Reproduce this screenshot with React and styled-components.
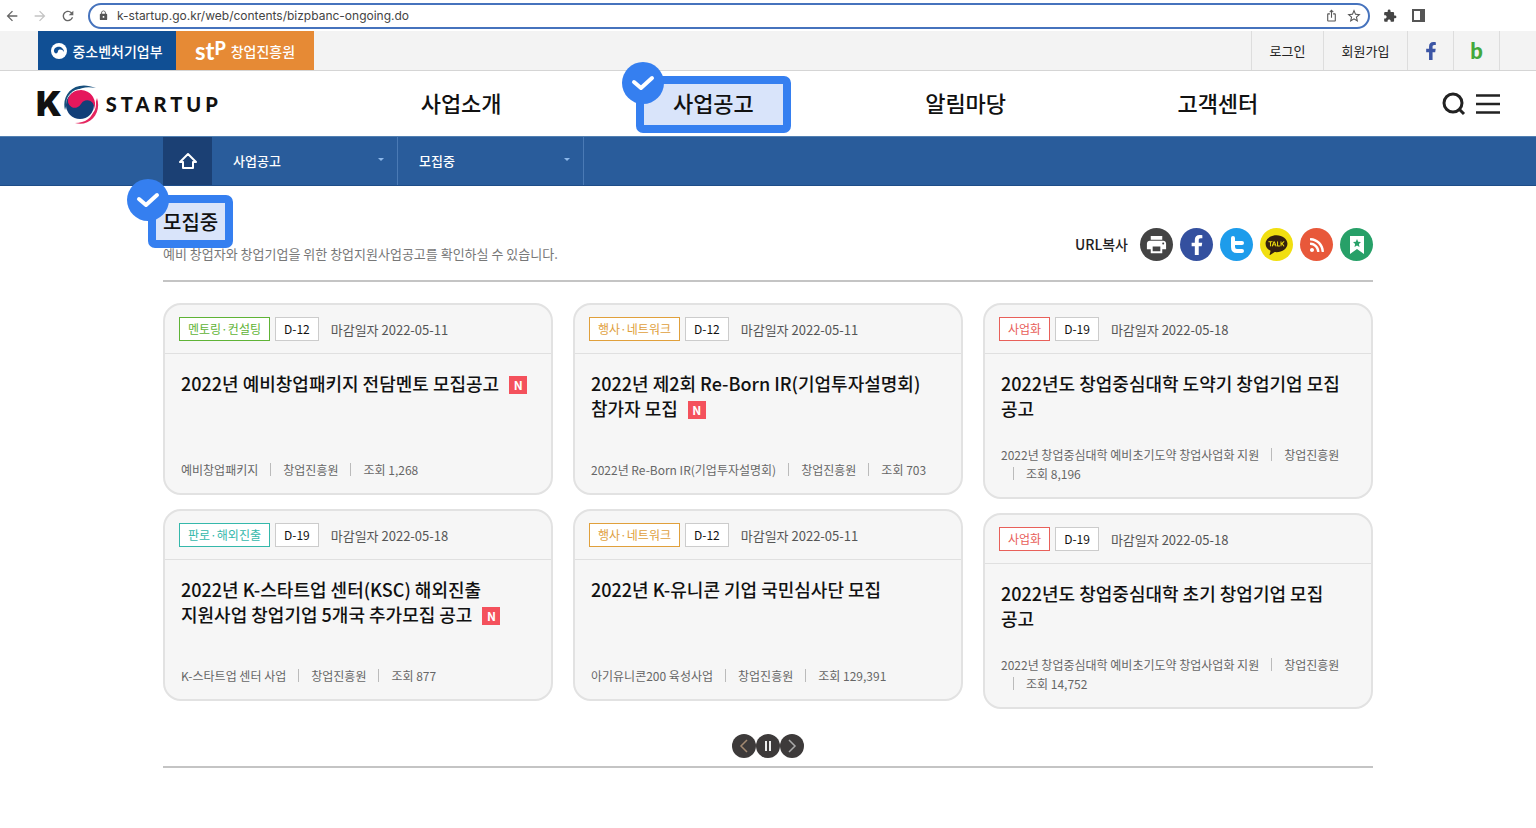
import React from "react"
import styled, { createGlobalStyle } from "styled-components"
import {
  MdArrowBack,
  MdArrowForward,
  MdRefresh,
  MdLock,
  MdIosShare,
  MdStarBorder,
  MdExtension,
  MdPrint,
} from "react-icons/md"
import { FaFacebookF, FaRss } from "react-icons/fa"
import { RiKakaoTalkFill } from "react-icons/ri"

const columns = [
  [
    {
      tag: "멘토링·컨설팅",
      color: "#5fb336",
      dday: "D-12",
      date: "2022-05-11",
      title: "2022년 예비창업패키지 전담멘토 모집공고",
      isNew: true,
      meta: ["예비창업패키지", "창업진흥원", "조회 1,268"],
    },
    {
      tag: "판로·해외진출",
      color: "#35b8ab",
      dday: "D-19",
      date: "2022-05-18",
      title: "2022년 K-스타트업 센터(KSC) 해외진출 지원사업 창업기업 5개국 추가모집 공고",
      isNew: true,
      meta: ["K-스타트업 센터 사업", "창업진흥원", "조회 877"],
    },
  ],
  [
    {
      tag: "행사·네트워크",
      color: "#e0a03c",
      dday: "D-12",
      date: "2022-05-11",
      title: "2022년 제2회 Re-Born IR(기업투자설명회) 참가자 모집",
      isNew: true,
      meta: ["2022년 Re-Born IR(기업투자설명회)", "창업진흥원", "조회 703"],
    },
    {
      tag: "행사·네트워크",
      color: "#e0a03c",
      dday: "D-12",
      date: "2022-05-11",
      title: "2022년 K-유니콘 기업 국민심사단 모집",
      meta: ["아기유니콘200 육성사업", "창업진흥원", "조회 129,391"],
    },
  ],
  [
    {
      tag: "사업화",
      color: "#e8605a",
      dday: "D-19",
      date: "2022-05-18",
      title: "2022년도 창업중심대학 도약기 창업기업 모집 공고",
      meta: ["2022년 창업중심대학 예비초기도약 창업사업화 지원", "창업진흥원", "조회 8,196"],
    },
    {
      tag: "사업화",
      color: "#e8605a",
      dday: "D-19",
      date: "2022-05-18",
      title: "2022년도 창업중심대학 초기 창업기업 모집 공고",
      meta: ["2022년 창업중심대학 예비초기도약 창업사업화 지원", "창업진흥원", "조회 14,752"],
    },
  ],
]

const menu = ["사업소개", "사업공고", "알림마당", "고객센터"]

const Taegeuk = () => (
  <svg width="38" height="42" viewBox="0 0 38 42" aria-hidden="true">
    <path d="M3 27C-1 12 12 -4 34 5C21 2 10 7 6 17Z" fill="#164f7c" />
    <path d="M35 15C40 30 28 44 13 40C23 40 31 35 32 25Z" fill="#e5265f" />
    <circle cx="19" cy="21" r="15" fill="#fff" />
    <circle cx="18" cy="22" r="14" fill="#123f78" />
    <circle cx="20" cy="21" r="14" fill="none" />
    <path
      d="M5 21A14 14 0 0 1 33 21A7 7 0 0 0 19 21A7 7 0 0 1 5 21Z"
      fill="#e5175c"
      transform="rotate(28 19 21)"
    />
  </svg>
)

const GovMark = () => (
  <svg width="16" height="16" viewBox="0 0 16 16" aria-hidden="true">
    <circle cx="8" cy="8" r="8" fill="#fff" />
    <path
      d="M3 7C3 11 7 13 10 12C13 11 14 8 12 6C11 5 9 6 9 8C8 10 5 10 3 7Z"
      fill="#104f94"
      transform="rotate(180 8 8)"
    />
  </svg>
)

const CheckMark = () => (
  <svg width="24" height="18" viewBox="0 0 24 18" aria-hidden="true">
    <path
      d="M3 8L10 14L21 4"
      fill="none"
      stroke="#fff"
      strokeWidth="4"
      strokeLinecap="round"
      strokeLinejoin="round"
    />
  </svg>
)

const Highlight = ({ wide }) => (
  <HighlightBox $wide={wide}>
    <HighlightBadge $wide={wide}>
      <CheckMark />
    </HighlightBadge>
  </HighlightBox>
)

const Notice = ({ item }) => (
  <Card>
    <CardHead>
      <Tag $color={item.color}>{item.tag}</Tag>
      <Dday>{item.dday}</Dday>
      <Deadline>마감일자 {item.date}</Deadline>
    </CardHead>
    <CardBody>
      <CardTitle>
        <a href="#notice">{item.title}</a>
        {item.isNew && <NewBadge>N</NewBadge>}
      </CardTitle>
      <Meta>
        {item.meta.map(text => (
          <li key={text}>{text}</li>
        ))}
      </Meta>
    </CardBody>
  </Card>
)

const App = () => {
  return (
    <>
      <GlobalStyle />
      <BrowserBar>
        <BarButton aria-label="뒤로">
          <MdArrowBack />
        </BarButton>
        <BarButton aria-label="앞으로" disabled>
          <MdArrowForward />
        </BarButton>
        <BarButton aria-label="새로고침">
          <MdRefresh />
        </BarButton>
        <Address>
          <MdLock size={11} />
          <input
            type="text"
            aria-label="주소"
            defaultValue="k-startup.go.kr/web/contents/bizpbanc-ongoing.do"
          />
          <MdIosShare size={13} />
          <MdStarBorder size={16} />
        </Address>
        <BarButton aria-label="확장 프로그램" $dark>
          <MdExtension size={14} />
        </BarButton>
        <BarButton aria-label="사이드 패널" $dark>
          <svg width="13" height="13" viewBox="0 0 13 13">
            <rect x="1" y="1" width="11" height="11" fill="none" stroke="#555" strokeWidth="2" />
            <rect x="8" y="1" width="4" height="11" fill="#555" />
          </svg>
        </BarButton>
      </BrowserBar>

      <TopBar>
        <Agency href="#mss" $bg="#104f94">
          <GovMark />
          중소벤처기업부
        </Agency>
        <Agency href="#kised" $bg="#e68a35">
          <Stp>
            st<b>P</b>
          </Stp>
          창업진흥원
        </Agency>
        <UserLinks>
          <UserLink href="#login" $width={72}>
            로그인
          </UserLink>
          <UserLink href="#join" $width={84}>
            회원가입
          </UserLink>
          <UserLink href="#facebook" aria-label="페이스북" $width={46}>
            <FaFacebookF size={18} color="#3c55a5" />
          </UserLink>
          <UserLink href="#blog" $width={46}>
            <BlogMark>b</BlogMark>
          </UserLink>
        </UserLinks>
      </TopBar>

      <Header>
        <Logo href="#home">
          <LogoK>K</LogoK>
          <Taegeuk />
          <LogoText>STARTUP</LogoText>
        </Logo>
        <Nav>
          {menu.map(name => (
            <NavLink key={name} href="#menu">
              {name === "사업공고" && <Highlight wide />}
              <span>{name}</span>
            </NavLink>
          ))}
        </Nav>
        <Tools>
          <button aria-label="검색">
            <svg width="24" height="24" viewBox="0 0 24 24">
              <circle cx="11" cy="11" r="9" fill="none" stroke="#222" strokeWidth="3" />
              <path d="M17 17L22 22" stroke="#222" strokeWidth="3" />
            </svg>
          </button>
          <button aria-label="전체메뉴">
            <svg width="24" height="20" viewBox="0 0 24 20">
              <path d="M0 1.500H24M0 10H24M0 18.500H24" stroke="#222" strokeWidth="2.400" />
            </svg>
          </button>
        </Tools>
      </Header>

      <Breadcrumb>
        <Inner>
          <HomeLink href="#home" aria-label="홈">
            <svg width="20" height="18" viewBox="0 0 20 18">
              <path
                d="M10 2L2 10H5V16H15V10H18Z"
                fill="none"
                stroke="#fff"
                strokeWidth="2"
                strokeLinejoin="round"
              />
            </svg>
          </HomeLink>
          {["사업공고", "모집중"].map(name => (
            <Crumb key={name}>
              <select aria-label={name} defaultValue={name}>
                <option>{name}</option>
              </select>
              <svg width="6" height="4" viewBox="0 0 6 4" aria-hidden="true">
                <path d="M0 0H6L3 3Z" fill="#8db8ea" />
              </svg>
            </Crumb>
          ))}
        </Inner>
      </Breadcrumb>

      <Main>
        <PageHead>
          <div>
            <PageTitle>
              <Highlight />
              <span>모집중</span>
            </PageTitle>
            <Description>
              예비 창업자와 창업기업을 위한 창업지원사업공고를 확인하실 수 있습니다.
            </Description>
          </div>
          <Share>
            <CopyButton>URL복사</CopyButton>
            <ShareButton aria-label="인쇄" $bg="#444">
              <MdPrint size={23} />
            </ShareButton>
            <ShareButton aria-label="페이스북" $bg="#34509f">
              <FaFacebookF size={20} />
            </ShareButton>
            <ShareButton aria-label="트위터" $bg="#1d9ceb">
              <svg width="14" height="18" viewBox="0 0 14 18">
                <path
                  d="M3 2V11Q3 15 7 15H12M3 7H12"
                  fill="none"
                  stroke="#fff"
                  strokeWidth="4"
                  strokeLinecap="round"
                />
              </svg>
            </ShareButton>
            <ShareButton aria-label="카카오톡" $bg="#f1df10">
              <RiKakaoTalkFill size={25} color="#34200f" />
            </ShareButton>
            <ShareButton aria-label="RSS" $bg="#e8583a">
              <FaRss size={16} />
            </ShareButton>
            <ShareButton aria-label="북마크" $bg="#27a068">
              <svg width="14" height="18" viewBox="0 0 14 18">
                <path d="M0 0H14V18L7 13L0 18Z" fill="#fff" />
                <path
                  d="M7 3L8.200 5.800L11 6L8.900 8L9.500 11L7 9.400L4.500 11L5.100 8L3 6L5.800 5.800Z"
                  fill="#27a068"
                />
              </svg>
            </ShareButton>
          </Share>
        </PageHead>

        <Board>
          {columns.map((items, i) => (
            <Column key={i}>
              {items.map(item => (
                <Notice key={item.title} item={item} />
              ))}
            </Column>
          ))}
        </Board>

        <Pager>
          <PagerButton aria-label="이전">
            <svg width="10" height="14" viewBox="0 0 10 14">
              <path d="M8 1L2 7L8 13" fill="none" stroke="#a38a72" strokeWidth="1.500" />
            </svg>
          </PagerButton>
          <PagerButton aria-label="정지">
            <svg width="10" height="14" viewBox="0 0 10 14">
              <path d="M3 2V12M7 2V12" stroke="#eee" strokeWidth="2" />
            </svg>
          </PagerButton>
          <PagerButton aria-label="다음">
            <svg width="10" height="14" viewBox="0 0 10 14">
              <path d="M2 1L8 7L2 13" fill="none" stroke="#aaa" strokeWidth="1.500" />
            </svg>
          </PagerButton>
        </Pager>
      </Main>
    </>
  )
}

const GlobalStyle = createGlobalStyle`
  * {
    box-sizing: border-box;
  }
  body {
    margin: 0;
    background: #fff;
    color: #222;
    font-family: "Noto Sans CJK KR", sans-serif;
    font-size: 13px;
    word-break: keep-all;
  }
  a {
    color: inherit;
    text-decoration: none;
  }
  button {
    padding: 0;
    border: 0;
    background: none;
    color: inherit;
    font: inherit;
    cursor: pointer;
  }
  h1, h2, p, ul {
    margin: 0;
    padding: 0;
  }
  svg {
    display: block;
    flex: none;
  }
`

const BrowserBar = styled.div`
  display: flex;
  align-items: center;
  gap: 12px;
  height: 31px;
  padding: 0 110px 0 4px;
`

const BarButton = styled.button`
  display: flex;
  justify-content: center;
  width: 16px;
  color: ${props => (props.$dark ? "#444" : "#666")};
  font-size: 16px;

  &:disabled {
    color: #c4c4c4;
  }
`

const Address = styled.div`
  flex: 1;
  display: flex;
  align-items: center;
  gap: 8px;
  height: 26px;
  padding: 0 6px 0 8px;
  border: 2px solid #4673bd;
  border-radius: 13px;
  color: #555;

  input {
    flex: 1;
    border: 0;
    padding: 0;
    outline: 0;
    background: none;
    color: #444;
    font-family: Inter, sans-serif;
    font-size: 12px;
  }
`

const TopBar = styled.div`
  display: flex;
  height: 40px;
  padding: 0 36px 0 38px;
  background: #f3f3f3;
  border-bottom: 1px solid #d5d5d5;
`

const Agency = styled.a`
  display: flex;
  align-items: center;
  justify-content: center;
  gap: 5px;
  width: 138px;
  background: ${props => props.$bg};
  color: #fff;
  font-size: 14px;
  font-weight: 500;
`

const Stp = styled.span`
  font-family: Lato, sans-serif;
  font-size: 24px;
  line-height: 24px;
  font-weight: 700;

  b {
    font-size: 18px;
    vertical-align: top;
    line-height: 18px;
  }
`

const UserLinks = styled.div`
  display: flex;
  margin-left: auto;
  border-right: 1px solid #ddd;
`

const UserLink = styled.a`
  display: flex;
  align-items: center;
  justify-content: center;
  width: ${props => props.$width}px;
  border-left: 1px solid #ddd;
`

const BlogMark = styled.b`
  color: #43a83c;
  font-family: Lato, sans-serif;
  font-size: 22px;
  font-weight: 900;
`

const Header = styled.header`
  display: flex;
  align-items: center;
  height: 65px;
  padding: 0 36px;
`

const Logo = styled.a`
  display: flex;
  align-items: center;
  flex: 0 0 299px;
`

const LogoK = styled.span`
  color: #111;
  font-family: Inter, sans-serif;
  font-size: 34px;
  font-weight: 900;
  line-height: 40px;
`

const LogoText = styled.span`
  margin-left: 6px;
  color: #111;
  font-family: Lato, sans-serif;
  font-size: 20px;
  font-weight: 900;
  letter-spacing: 4px;
`

const Nav = styled.nav`
  flex: 1;
  display: grid;
  grid-template-columns: repeat(4, 1fr);
  height: 65px;
`

const NavLink = styled.a`
  position: relative;
  display: flex;
  align-items: center;
  justify-content: center;
  padding-bottom: 3px;
  color: #111;
  font-size: 22px;
  font-weight: 500;

  span {
    position: relative;
  }
`

const HighlightBox = styled.i`
  position: absolute;
  top: ${props => (props.$wide ? 5 : -12)}px;
  left: ${props => (props.$wide ? "calc(50% - 77px)" : "-15px")};
  width: ${props => (props.$wide ? 155 : 85)}px;
  height: ${props => (props.$wide ? 57 : 53)}px;
  border: 8px solid #357ff0;
  border-radius: 7px;
  background: #d9e4fa;
`

const HighlightBadge = styled.i`
  position: absolute;
  top: ${props => (props.$wide ? -22 : -24)}px;
  left: ${props => (props.$wide ? -22 : -29)}px;
  display: flex;
  align-items: center;
  justify-content: center;
  width: 42px;
  height: 42px;
  border-radius: 50%;
  background: #357ff0;
`

const Tools = styled.div`
  flex: 0 0 156px;
  display: flex;
  justify-content: flex-end;
  align-items: center;
  gap: 10px;
`

const Breadcrumb = styled.div`
  height: 50px;
  background: #295c9b;
  border-top: 1px solid #5280b2;
  border-bottom: 1px solid #1e4d88;
`

const Inner = styled.div`
  display: flex;
  max-width: 1210px;
  height: 100%;
  margin: 0 auto;
`

const HomeLink = styled.a`
  display: flex;
  align-items: center;
  justify-content: center;
  width: 49px;
  background: #1b4074;
`

const Crumb = styled.label`
  display: flex;
  align-items: center;
  width: 186px;
  padding: 0 13px 2px 21px;
  border-right: 1px solid #4a7ab5;

  select {
    flex: 1;
    padding: 0;
    border: 0;
    appearance: none;
    background: none;
    color: #fff;
    font: inherit;
    font-weight: 500;
  }
`

const Main = styled.main`
  max-width: 1210px;
  margin: 0 auto;
  border-bottom: 2px solid #c4c4c4;
`

const PageHead = styled.div`
  display: flex;
  justify-content: space-between;
  padding: 21px 0 16px;
  border-bottom: 2px solid #c4c4c4;
`

const PageTitle = styled.h1`
  position: relative;
  color: #111;
  font-size: 20px;
  font-weight: 500;
  line-height: 30px;

  span {
    position: relative;
  }
`

const Description = styled.p`
  position: relative;
  margin-top: 7px;
  color: #777;
  line-height: 20px;
`

const Share = styled.div`
  display: flex;
  align-items: flex-end;
  gap: 7px;
  padding-bottom: 3px;
`

const CopyButton = styled.button`
  margin-right: 5px;
  font-size: 14px;
  font-weight: 500;
  line-height: 33px;
`

const ShareButton = styled.button`
  display: flex;
  align-items: center;
  justify-content: center;
  width: 33px;
  height: 33px;
  border-radius: 50%;
  background: ${props => props.$bg};
  color: #fff;
`

const Board = styled.div`
  display: grid;
  grid-template-columns: repeat(3, 1fr);
  align-items: start;
  gap: 20px;
  margin-top: 21px;
`

const Column = styled.div`
  display: grid;
  gap: 14px;
`

const Card = styled.article`
  border: 2px solid #e2e2e2;
  border-radius: 18px;
  background: #f6f6f6;
`

const CardHead = styled.div`
  display: flex;
  align-items: center;
  gap: 5px;
  height: 49px;
  padding: 0 14px;
  border-bottom: 1px solid #e0e0e0;
  font-size: 12px;
`

const Tag = styled.span`
  padding: 0 8px;
  border: 1px solid ${props => props.$color};
  background: #fff;
  color: ${props => props.$color};
  line-height: 22px;
`

const Dday = styled.span`
  padding: 0 8px;
  border: 1px solid #ccc;
  background: #fff;
  color: #111;
  line-height: 22px;
`

const Deadline = styled.span`
  margin-left: 7px;
  color: #555;
  font-size: 13px;
`

const CardBody = styled.div`
  padding: 17px 20px 14px 16px;
`

const CardTitle = styled.h2`
  min-height: 50px;
  color: #111;
  font-size: 18px;
  font-weight: 500;
  line-height: 25px;
`

const NewBadge = styled.span`
  display: inline-block;
  width: 18px;
  height: 18px;
  margin-left: 10px;
  background: #f4515c;
  color: #fff;
  font-size: 12px;
  font-weight: 700;
  line-height: 18px;
  text-align: center;
  vertical-align: 1px;
`

const Meta = styled.ul`
  display: flex;
  flex-wrap: wrap;
  align-content: flex-end;
  min-height: 34px;
  margin-top: 24px;
  color: #666;
  font-size: 12px;
  line-height: 19px;
  list-style: none;

  li {
    display: flex;
    align-items: center;
  }
  li + li::before {
    content: "";
    width: 1px;
    height: 13px;
    margin: 0 12px;
    background: #bbb;
  }
`

const Pager = styled.div`
  display: flex;
  justify-content: center;
  padding: 25px 0 8px;
`

const PagerButton = styled.button`
  display: flex;
  align-items: center;
  justify-content: center;
  width: 24px;
  height: 24px;
  border-radius: 50%;
  background: #3d3a3a;
`

export default App
